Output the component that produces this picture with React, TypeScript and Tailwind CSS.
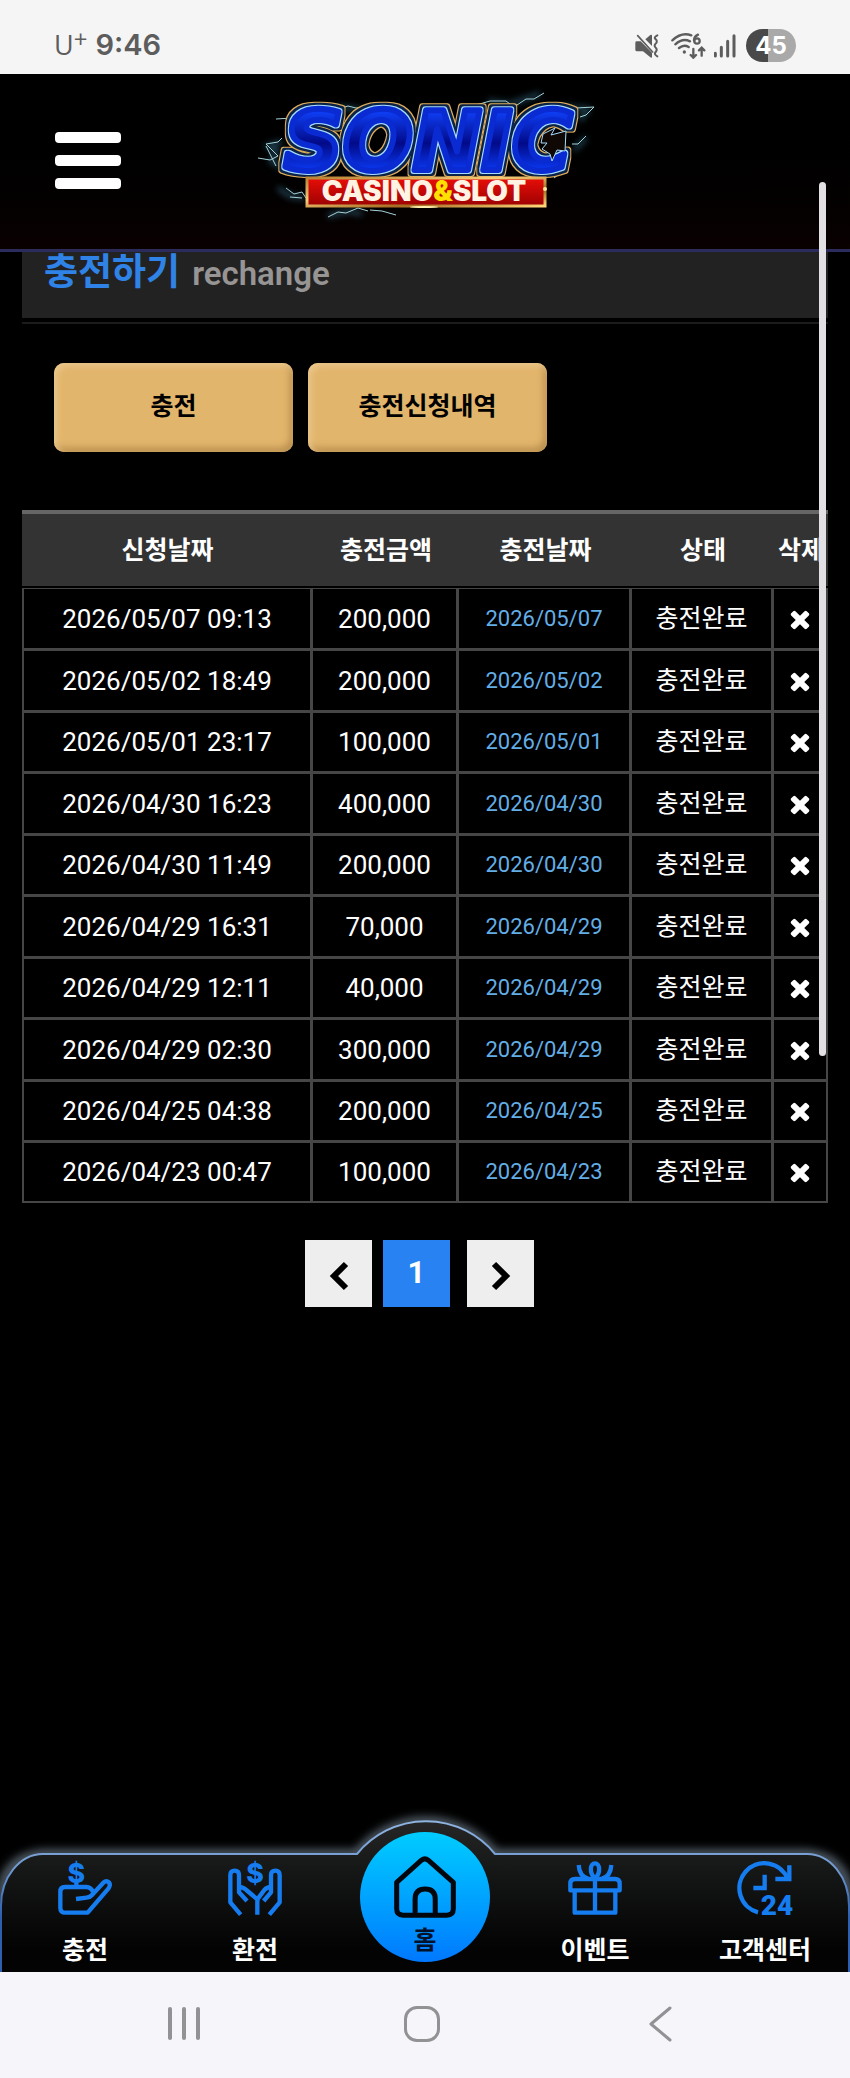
import type { ReactNode } from 'react';

type DepositTypes = {
  requested: string;
  amount: string;
  paid: string;
};

type MenuTypes = {
  title: string;
  icon: ReactNode;
};

const deposits: DepositTypes[] = [
  { requested: '2026/05/07 09:13', amount: '200,000', paid: '2026/05/07' },
  { requested: '2026/05/02 18:49', amount: '200,000', paid: '2026/05/02' },
  { requested: '2026/05/01 23:17', amount: '100,000', paid: '2026/05/01' },
  { requested: '2026/04/30 16:23', amount: '400,000', paid: '2026/04/30' },
  { requested: '2026/04/30 11:49', amount: '200,000', paid: '2026/04/30' },
  { requested: '2026/04/29 16:31', amount: '70,000', paid: '2026/04/29' },
  { requested: '2026/04/29 12:11', amount: '40,000', paid: '2026/04/29' },
  { requested: '2026/04/29 02:30', amount: '300,000', paid: '2026/04/29' },
  { requested: '2026/04/25 04:38', amount: '200,000', paid: '2026/04/25' },
  { requested: '2026/04/23 00:47', amount: '100,000', paid: '2026/04/23' },
];

const headers = ['신청날짜', '충전금액', '충전날짜', '상태', '삭제'];

function StatusBar() {
  return (
    <div className="flex h-[74px] items-end justify-between bg-[#f5f5f5] pr-[54px] pb-3 pl-[54px] text-[#5d5d5d]">
      <div className="flex items-center gap-2">
        <span className="flex items-start font-['Open_Sans'] text-[27px] leading-[34px]">
          U<span className="text-[24px] leading-[22px]">+</span>
        </span>
        <span className="font-['Inter'] text-[29px] leading-[34px] font-semibold">
          9:46
        </span>
      </div>
      <div className="flex items-center">
        {/* muted / vibrate */}
        <svg className="h-6 w-6" viewBox="0 0 72 72" fill="currentColor">
          <path d="M1 26q0-4 4-4h12l34 34v14q-2 2-5 0L24 52H6q-5 0-5-5z" />
          <path d="M31 16L46 3q5-2 5 2v31z" />
          <path d="M8 5l45 49" stroke="currentColor" strokeWidth="5" strokeLinecap="round" />
          <path
            d="M67 4q-12 6-5 12t0 13q-6 6 0 12t0 13q-6 7 5 13"
            fill="none"
            stroke="currentColor"
            strokeWidth="6"
            strokeLinecap="round"
          />
        </svg>
        {/* wifi 6 */}
        <svg
          className="ml-3 h-[26px] w-[35px]"
          viewBox="0 0 105 78"
          fill="none"
          stroke="currentColor"
          strokeWidth="7"
          strokeLinecap="round"
        >
          <path d="M4 22Q32-4 61 7M13 34q22-20 44-9M24 45q15-12 29-3" />
          <circle cx="40" cy="57" r="5" fill="currentColor" stroke="none" />
          <path d="M81 5q-12 6-12 17" />
          <circle cx="78" cy="24" r="8" />
          <path d="M67 48v25M59 66l8 8 8-8M92 68V45M84 52l8-8 8 8" />
        </svg>
        <svg
          className="ml-2 h-6 w-[22px]"
          viewBox="0 0 66 72"
          stroke="currentColor"
          strokeWidth="9"
          strokeLinecap="round"
        >
          <path d="M4 58v8M22 40v26M41 22v44M60 5v61" />
        </svg>
        <span className="ml-[10px] flex h-[33px] w-[50px] items-center justify-center rounded-full bg-linear-to-r from-[#494949] from-45% to-[#a9a9a9] to-45% font-['Inter'] text-[24px] leading-none font-bold text-white">
          45
        </span>
      </div>
    </div>
  );
}

function Logo() {
  return (
    <svg className="h-[150px] w-[380px]" viewBox="0 0 380 150" role="img" aria-label="SONIC CASINO&SLOT">
      <defs>
        <linearGradient id="letter" x1="0" y1="0" x2="0" y2="1">
          <stop offset=".2" stopColor="#0e3cf0" />
          <stop offset=".52" stopColor="#020a88" />
          <stop offset=".8" stopColor="#0a38f0" />
        </linearGradient>
        <linearGradient id="gold" x1="0" y1="0" x2="1" y2="1">
          <stop offset="0" stopColor="#b98435" />
          <stop offset=".4" stopColor="#f5cc77" />
          <stop offset=".7" stopColor="#a56a20" />
          <stop offset="1" stopColor="#ffd678" />
        </linearGradient>
        <linearGradient id="plate" x1="0" y1="0" x2="0" y2="1">
          <stop offset="0" stopColor="#e80d08" />
          <stop offset="1" stopColor="#9c0202" />
        </linearGradient>
        <filter id="blur" x="-20%" y="-20%" width="140%" height="140%">
          <feGaussianBlur stdDeviation="3" />
        </filter>
        {/* light blue, navy and gold rings round the letters */}
        <filter id="rings" x="-10%" y="-20%" width="120%" height="140%" colorInterpolationFilters="sRGB">
          <feMorphology in="SourceAlpha" operator="dilate" radius="1" result="a1" />
          <feMorphology in="SourceAlpha" operator="dilate" radius="3" result="a2" />
          <feMorphology in="SourceAlpha" operator="dilate" radius="4" result="a3" />
          <feFlood floodColor="#a8dcff" />
          <feComposite in2="a1" operator="in" result="light" />
          <feFlood floodColor="#0a2347" />
          <feComposite in2="a2" operator="in" result="navy" />
          <feFlood floodColor="#e0ad5a" />
          <feComposite in2="a3" operator="in" result="outer" />
          <feMerge>
            <feMergeNode in="outer" />
            <feMergeNode in="navy" />
            <feMergeNode in="light" />
            <feMergeNode in="SourceGraphic" />
          </feMerge>
        </filter>
      </defs>
      {/* lightning */}
      <g fill="none" stroke="#3c7f9c" strokeWidth="4" filter="url(#blur)" opacity=".6">
        <path d="M42 62l-14 4 9 5-6 10 10 6M38 108l12 8 14 2M88 136l20-5 14 3M98 27l16 2 10 2M248 21l22 3 30-10M322 27l26 2-8 12M346 58l-12 12" />
      </g>
      <g fill="none" stroke="#a5d3da" strokeWidth="1">
        <path d="M18 78l12 2 8-4-12-12 12-2 4-4M26 66l6 12 4 8M36 39l16-1M46 108l8 6 8-2 4 6M50 117l12 1M88 137l10-5 8 1 12-5 10 3M130 130l12 1 14 4M98 29l10-3 8 2 12-1M222 31l14-6 14-4 16 0 8 6 12-8 8 0 10-6M312 29l14-5 10 4 18-1-8 8-6 2M346 56l-8 8-6 0M314 98l8-6" />
      </g>
      <text
        x="44"
        y="90"
        fontFamily="'DejaVu Sans', sans-serif"
        fontSize="82"
        fontWeight="700"
        fontStyle="italic"
        fill="url(#letter)"
        stroke="#0a2ad2"
        strokeWidth="6"
        strokeLinejoin="round"
        filter="url(#rings)"
      >
        SONIC
      </text>
      {/* jagged bite of the last letter */}
      <path
        d="M326 51l-15 4 4-7-12 6-2 9 6 0-5 6 8 5 2 7 5-11 8 1z"
        fill="#100804"
        stroke="#a8dcff"
        strokeWidth="1"
      />
      <rect x="67" y="98" width="238" height="28" fill="url(#plate)" stroke="url(#gold)" strokeWidth="3" />
      <ellipse cx="184" cy="127" rx="14" ry="1" fill="#fff2b0" />
      <circle cx="305" cy="109" r="2" fill="#ffe9a0" />
      <text
        x="184"
        y="121"
        textAnchor="middle"
        fontFamily="Inter, sans-serif"
        fontSize="28"
        fontWeight="900"
        fill="#fff3e4"
      >
        CASINO<tspan fill="#ffe000">&amp;</tspan>SLOT
      </text>
    </svg>
  );
}

function Header() {
  return (
    <header className="flex h-[178px] items-start border-b-3 border-[#2b2b5c] bg-linear-to-b from-black to-[#0a0101]">
      <button
        type="button"
        aria-label="menu"
        className="mt-[58px] ml-[55px] flex w-[66px] flex-col gap-3"
      >
        <span className="h-[11px] w-full rounded-sm bg-white" />
        <span className="h-[11px] w-full rounded-sm bg-white" />
        <span className="h-[11px] w-full rounded-sm bg-white" />
      </button>
      <div className="flex flex-1 justify-center pt-[6px] pr-[111px]">
        <Logo />
      </div>
    </header>
  );
}

function DepositTable() {
  return (
    <table className="mt-[58px] h-[693px] w-full table-fixed border-separate border-spacing-0 text-center text-white">
      <colgroup>
        <col className="w-[291px]" />
        <col className="w-[146px]" />
        <col className="w-[173px]" />
        <col className="w-[142px]" />
        <col className="w-[54px]" />
      </colgroup>
      <thead>
        <tr className="h-[78px]">
          {headers.map((header) => (
            <th
              key={header}
              className="border-t-4 border-b-2 border-t-[#666] border-b-black bg-[#343334] p-0 pt-[2px] text-[25px] leading-[30px] font-bold whitespace-nowrap"
            >
              {header}
            </th>
          ))}
        </tr>
      </thead>
      <tbody className="[&>tr:first-child>td]:border-t-1 [&>tr:last-child>td]:border-b-2">
        {deposits.map((deposit) => (
          <tr
            key={deposit.requested}
            className="[&>td]:border-r-3 [&>td]:border-b-3 [&>td]:border-[#464646] [&>td]:p-0 [&>td:first-child]:border-l-2 [&>td:last-child]:border-r-2"
          >
            <td className="text-[26px] leading-[30px]">{deposit.requested}</td>
            <td className="text-[26px] leading-[30px]">{deposit.amount}</td>
            <td className="text-[22px] leading-[30px] text-[#63aee6]">{deposit.paid}</td>
            <td className="text-[25px] leading-[30px]">충전완료</td>
            <td>
              <button type="button" aria-label="삭제" className="block w-full">
                <svg className="mx-auto h-7 w-7" viewBox="0 0 1792 1792" fill="currentColor">
                  <path d="M1490 1322q0 40-28 68l-136 136q-28 28-68 28t-68-28l-294-294-294 294q-28 28-68 28t-68-28l-136-136q-28-28-28-68t28-68l294-294-294-294q-28-28-28-68t28-68l136-136q28-28 68-28t68 28l294 294 294-294q28-28 68-28t68 28l136 136q28 28 28 68t-28 68l-294 294 294 294q28 28 28 68z" />
                </svg>
              </button>
            </td>
          </tr>
        ))}
      </tbody>
    </table>
  );
}

function Pagination() {
  return (
    <div className="mt-[37px] flex justify-center pr-[11px]">
      <button
        type="button"
        aria-label="이전"
        className="flex h-[67px] w-[67px] items-center justify-center bg-[#eee] pt-[5px] text-black"
      >
        <svg className="h-[30px] w-5" viewBox="0 0 20 30" fill="none" stroke="currentColor" strokeWidth="6">
          <path d="M17 3L5 15l12 12" />
        </svg>
      </button>
      <button
        type="button"
        className="mr-[17px] ml-[11px] h-[67px] w-[67px] bg-[#2882f2] text-[31px] font-bold text-white"
      >
        1
      </button>
      <button
        type="button"
        aria-label="다음"
        className="flex h-[67px] w-[67px] items-center justify-center bg-[#eee] pt-[5px] text-black"
      >
        <svg className="h-[30px] w-5" viewBox="0 0 20 30" fill="none" stroke="currentColor" strokeWidth="6">
          <path d="M3 3l12 12L3 27" />
        </svg>
      </button>
    </div>
  );
}

function IconFrame({ children }: { children: ReactNode }) {
  return (
    <svg
      className="h-[54px] w-[54px] overflow-visible text-[#157df0]"
      viewBox="0 0 162 162"
      fill="none"
      stroke="currentColor"
      strokeWidth="13"
      strokeLinejoin="round"
    >
      {children}
    </svg>
  );
}

function Dollar({ x }: { x: number }) {
  return (
    <text
      x={x}
      y="66"
      textAnchor="middle"
      fontFamily="Inter, sans-serif"
      fontSize="80"
      fontWeight="800"
      fill="currentColor"
      stroke="none"
    >
      $
    </text>
  );
}

const menus: MenuTypes[] = [
  {
    title: '충전',
    icon: (
      <IconFrame>
        <Dollar x={55} />
        <path d="M55 66v12" />
        <path d="M54 114l32-4q10-1 16-8l34-37q9-8 17-1 6 8-2 19l-62 72H22Q7 155 7 140V92q0-14 14-14h64q14 0 21 16" />
      </IconFrame>
    ),
  },
  {
    title: '환전',
    icon: (
      <IconFrame>
        <Dollar x={81} />
        <path d="M38 161L7 124V42q0-13 13-13t13 13v52l24 26M33 78q12 0 22 9l33 28M88 161v-46" />
        <path d="M124 161l31-37V42q0-13-13-13t-13 13v52l-22 26M129 78q-12 0-20 9l-21 28" />
      </IconFrame>
    ),
  },
  {
    title: '홈',
    icon: (
      <svg
        className="h-[62px] w-[62px] text-[#02070d]"
        viewBox="0 0 185 184"
        fill="none"
        stroke="currentColor"
        strokeWidth="15"
        strokeLinejoin="round"
      >
        <path d="M8 78l74-66q10-8 20 0l75 66v79q0 19-19 19H27q-19 0-19-19z" />
        <path d="M63 176v-48q0-30 30-30t30 30v48" />
      </svg>
    ),
  },
  {
    title: '이벤트',
    icon: (
      <IconFrame>
        <path d="M20 90v65h122V90M81 54v101" />
        <path d="M7 88V68q0-14 14-14h120q14 0 14 14v20z" />
        <path d="M81 52C62 34 67 7 81 7s19 27 0 45M32 12q2 34 28 41M130 12q-2 34-28 41" />
      </IconFrame>
    ),
  },
  {
    title: '고객센터',
    icon: (
      <IconFrame>
        <path d="M60 154A75 75 0 1 1 149 54" />
        <path d="M154 13v41h-42M80 41v40H46" strokeLinejoin="miter" />
        <text
          x="117"
          y="161"
          textAnchor="middle"
          fontFamily="Roboto, sans-serif"
          fontSize="84"
          fontWeight="900"
          fill="currentColor"
          stroke="none"
        >
          24
        </text>
      </IconFrame>
    ),
  },
];

function BottomMenu() {
  return (
    <nav className="relative h-[152px]">
      {/* glowing outline behind the items */}
      <svg
        className="absolute inset-0 h-full w-full overflow-visible"
        viewBox="0 0 850 152"
        preserveAspectRatio="none"
      >
        <defs>
          <linearGradient id="bar" x1="0" y1="0" x2="0" y2="1">
            <stop offset="0" stopColor="#262626" />
            <stop offset=".3" stopColor="#161717" />
            <stop offset=".8" stopColor="#030304" />
          </linearGradient>
          <linearGradient id="edge" x1="0" y1="0" x2="0" y2="1">
            <stop offset="0" stopColor="#8fb4e0" />
            <stop offset=".3" stopColor="#6f97cf" />
            <stop offset=".6" stopColor="#2e5fae" />
          </linearGradient>
          <filter id="glow" x="-5%" y="-20%" width="110%" height="140%" colorInterpolationFilters="sRGB">
            <feGaussianBlur stdDeviation="4" />
          </filter>
          <clipPath id="inside">
            <rect x="0" y="-30" width="850" height="182" />
          </clipPath>
        </defs>
        <g clipPath="url(#inside)">
          <path
            d="M1 160V76Q4 38 42 34H357A89 89 0 0 1 495 34H808Q846 38 849 76V160"
            fill="none"
            stroke="#56626d"
            strokeWidth="9"
            filter="url(#glow)"
          />
          <path
            d="M1 160V86A42 52 0 0 1 43 34H357A89 89 0 0 1 495 34H807A42 52 0 0 1 849 86V160"
            fill="url(#bar)"
            stroke="url(#edge)"
            strokeWidth="2"
          />
        </g>
      </svg>
      <ul className="relative grid h-full grid-cols-5">
        {menus.map((menu, index) => (
          <li key={index} className="flex justify-center">
            {menu.title === '홈' ? (
              <a
                href="#home"
                className="mt-3 flex h-[130px] w-[130px] flex-col items-center rounded-full bg-linear-to-b from-[#00ccff] to-[#0078ff] pt-6 text-[25px] leading-[30px] font-bold text-[#02122b]"
              >
                {menu.icon}
                <span className="mt-2">{menu.title}</span>
              </a>
            ) : (
              <a
                href="#menu"
                className="flex flex-col items-center pt-[41px] text-[25px] leading-[30px] font-bold text-white"
              >
                {menu.icon}
                <span className="mt-[21px]">{menu.title}</span>
              </a>
            )}
          </li>
        ))}
      </ul>
    </nav>
  );
}

function SystemBar() {
  return (
    <div className="grid h-[106px] grid-cols-3 items-start bg-[#f6f5f9] pt-8 pr-[70px] pl-[65px] text-[#929194]">
      <button type="button" aria-label="recents" className="flex justify-center gap-[10px] pt-[3px]">
        <span className="h-[33px] w-1 rounded-full bg-current" />
        <span className="h-[33px] w-1 rounded-full bg-current" />
        <span className="h-[33px] w-1 rounded-full bg-current" />
      </button>
      <button type="button" aria-label="home" className="flex justify-center pt-[2px]">
        <span className="h-9 w-9 rounded-[13px] border-3 border-current" />
      </button>
      <button type="button" aria-label="back" className="flex justify-center pt-[2px]">
        <svg
          className="h-9 w-6"
          viewBox="0 0 24 36"
          fill="none"
          stroke="currentColor"
          strokeWidth="3"
          strokeLinecap="round"
          strokeLinejoin="round"
        >
          <path d="M21 2L2 18l19 16" />
        </svg>
      </button>
    </div>
  );
}

function App() {
  return (
    <div className="relative flex min-h-screen flex-col bg-black font-['Roboto','Noto_Sans_CJK_KR',sans-serif]">
      <StatusBar />
      <Header />
      <main className="flex-1 px-[22px]">
        {/* title section */}
        <div className="h-[66px] bg-[#232223]">
          <h1 className="flex items-baseline gap-3 pl-[22px] text-[37px] leading-[42px] font-bold text-[#2f83e6]">
            충전하기
            <span className="text-[33px] font-semibold text-[#979594]">rechange</span>
          </h1>
        </div>
        <div className="mt-1 h-[2px] bg-[#1b1b1b]" />
        {/* tab section */}
        <div className="mt-[39px] flex gap-[15px] pl-8 text-[25px] font-bold text-black">
          <button
            type="button"
            className="h-[89px] w-[239px] rounded-[10px] bg-[#e2b56c] pb-[2px] shadow-[inset_3px_3px_6px_#ebc88e,inset_-3px_-4px_7px_#b88e4c]"
          >
            충전
          </button>
          <button
            type="button"
            className="h-[89px] w-[239px] rounded-[10px] bg-[#e2b56c] pb-[2px] shadow-[inset_3px_3px_6px_#ebc88e,inset_-3px_-4px_7px_#b88e4c]"
          >
            충전신청내역
          </button>
        </div>
        <DepositTable />
        <Pagination />
      </main>
      <BottomMenu />
      <SystemBar />
      {/* scroll thumb */}
      <div className="absolute top-[182px] right-6 h-[874px] w-[7px] rounded-full bg-[#e2e0e3]" />
    </div>
  );
}

export default App;
